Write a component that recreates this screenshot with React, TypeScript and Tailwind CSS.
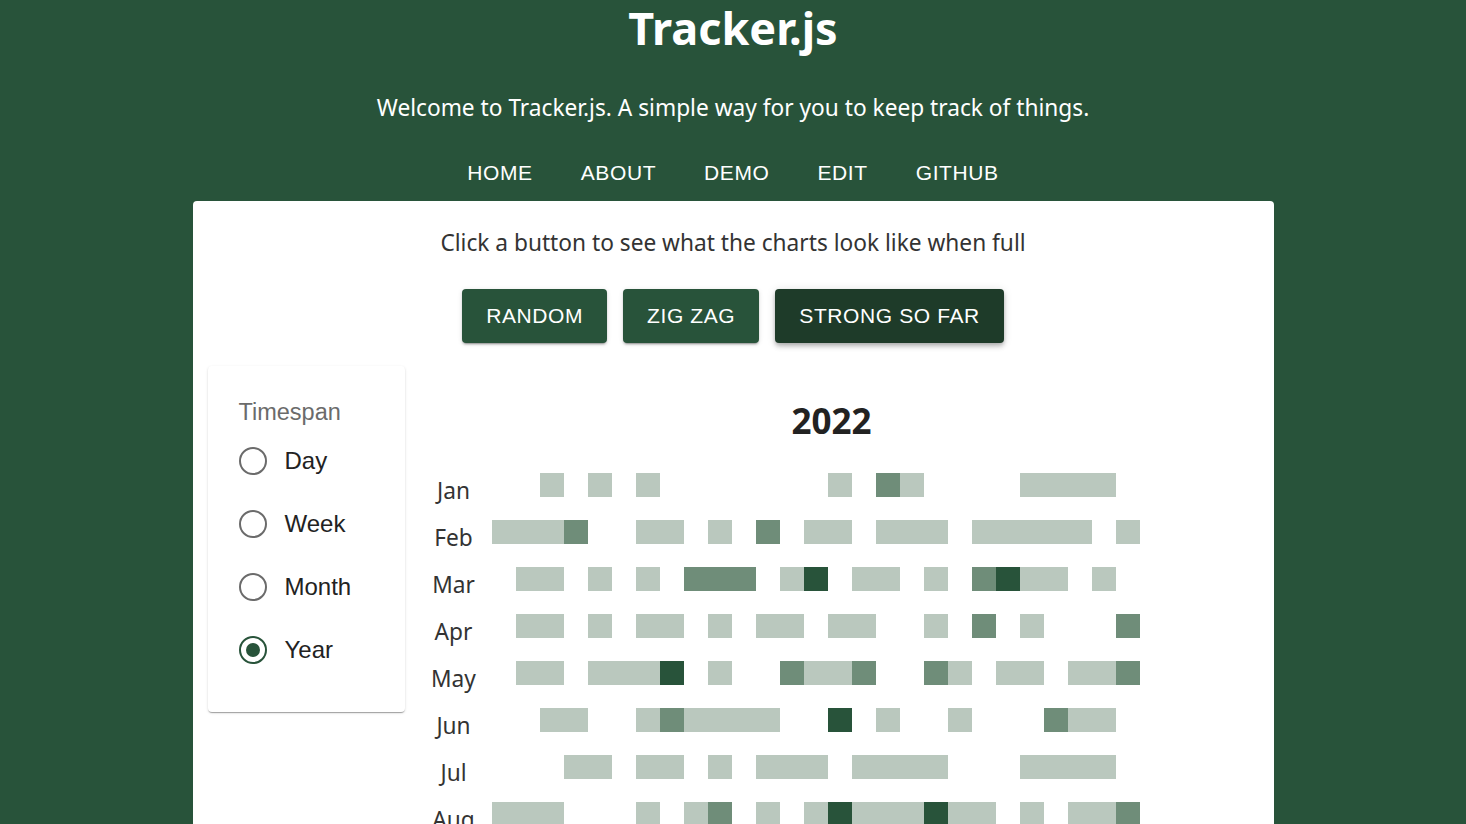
import React, { useState } from 'react';

type Run = [number, number, number];

const MONTHS: { name: string; runs: Run[] }[] = [
  { name: 'Jan', runs: [[2, 2, 1], [4, 4, 1], [6, 6, 1], [14, 14, 1], [16, 16, 2], [17, 17, 1], [22, 25, 1]] },
  { name: 'Feb', runs: [[0, 2, 1], [3, 3, 2], [6, 7, 1], [9, 9, 1], [11, 11, 2], [13, 14, 1], [16, 18, 1], [20, 24, 1], [26, 26, 1]] },
  { name: 'Mar', runs: [[1, 2, 1], [4, 4, 1], [6, 6, 1], [8, 10, 2], [12, 12, 1], [13, 13, 3], [15, 16, 1], [18, 18, 1], [20, 20, 2], [21, 21, 3], [22, 23, 1], [25, 25, 1]] },
  { name: 'Apr', runs: [[1, 2, 1], [4, 4, 1], [6, 7, 1], [9, 9, 1], [11, 12, 1], [14, 15, 1], [18, 18, 1], [20, 20, 2], [22, 22, 1], [26, 26, 2]] },
  { name: 'May', runs: [[1, 2, 1], [4, 6, 1], [7, 7, 3], [9, 9, 1], [12, 12, 2], [13, 14, 1], [15, 15, 2], [18, 18, 2], [19, 19, 1], [21, 22, 1], [24, 25, 1], [26, 26, 2]] },
  { name: 'Jun', runs: [[2, 3, 1], [6, 6, 1], [7, 7, 2], [8, 11, 1], [14, 14, 3], [16, 16, 1], [19, 19, 1], [23, 23, 2], [24, 25, 1]] },
  { name: 'Jul', runs: [[3, 4, 1], [6, 7, 1], [9, 9, 1], [11, 13, 1], [15, 18, 1], [22, 25, 1]] },
  { name: 'Aug', runs: [[0, 2, 1], [6, 6, 1], [8, 8, 1], [9, 9, 2], [11, 11, 1], [13, 13, 1], [14, 14, 3], [15, 17, 1], [18, 18, 3], [19, 20, 1], [22, 22, 1], [24, 25, 1], [26, 26, 2]] },
  { name: 'Sep', runs: [[1, 3, 1], [5, 5, 2], [8, 9, 1], [12, 12, 1], [15, 16, 1], [20, 20, 2], [23, 24, 1]] },
  { name: 'Oct', runs: [[0, 1, 1], [4, 4, 1], [7, 8, 1], [11, 11, 3], [14, 17, 1], [21, 21, 1], [25, 26, 1]] },
  { name: 'Nov', runs: [[2, 2, 1], [5, 7, 1], [10, 10, 2], [13, 14, 1], [18, 19, 1], [22, 22, 2]] },
  { name: 'Dec', runs: [[1, 1, 1], [3, 5, 1], [9, 9, 1], [12, 13, 1], [16, 16, 2], [19, 21, 1]] },
];

const DAYS = 31;

const levelClass = (level: number) => {
  if (level === 3) return 'bg-[#28533a]';
  if (level === 2) return 'bg-[#6f8d79]';
  if (level === 1) return 'bg-[#bac8be]';
  return 'bg-transparent';
};

const expand = (runs: Run[]) => {
  const cells = new Array(DAYS).fill(0);
  runs.forEach(([a, b, lvl]) => {
    for (let i = a; i <= b; i++) cells[i] = lvl;
  });
  return cells;
};

const NAV = ['Home', 'About', 'Demo', 'Edit', 'Github'];
const SPANS = ['Day', 'Week', 'Month', 'Year'];

const App: React.FC = () => {
  const [span, setSpan] = useState('Year');

  return (
    <div className="min-h-screen bg-[#28533a] pb-10">
      <header className="flex flex-col items-center text-white font-['Noto_Sans',sans-serif]">
        <h1 className="text-[45px] font-bold leading-[56px]">Tracker.js</h1>
        <p className="mt-[36px] text-[22.7px] leading-[32px]">
          Welcome to Tracker.js. A simple way for you to keep track of things.
        </p>
        <nav className="mt-[33px] flex gap-[48px] font-['Liberation_Sans',Arial,sans-serif] text-[21px] leading-[32px] tracking-[0.02857em] uppercase">
          {NAV.map((n) => (
            <a key={n} className="cursor-pointer">
              {n}
            </a>
          ))}
        </nav>
      </header>

      <main className="mx-auto mt-[12px] w-[1081px] rounded-[4px] bg-white px-[15px] pb-10">
        <p className="pt-[26px] text-center font-['Noto_Sans',sans-serif] text-[22.7px] leading-[32px] text-[#333]">
          Click a button to see what the charts look like when full
        </p>

        <div className="mt-[30px] flex justify-center gap-[16px] font-['Liberation_Sans',Arial,sans-serif] text-[21px] tracking-[0.02857em] text-white">
          <button className="h-[54px] rounded-[4px] bg-[#28533a] px-[24px] shadow-[0_3px_1px_-2px_rgba(0,0,0,0.2),0_2px_2px_0_rgba(0,0,0,0.14),0_1px_5px_0_rgba(0,0,0,0.12)]">
            RANDOM
          </button>
          <button className="h-[54px] rounded-[4px] bg-[#28533a] px-[24px] shadow-[0_3px_1px_-2px_rgba(0,0,0,0.2),0_2px_2px_0_rgba(0,0,0,0.14),0_1px_5px_0_rgba(0,0,0,0.12)]">
            ZIG ZAG
          </button>
          <button className="h-[54px] rounded-[4px] bg-[#1e3b29] px-[24px] shadow-[0_2px_4px_-1px_rgba(0,0,0,0.2),0_4px_5px_0_rgba(0,0,0,0.14),0_1px_10px_0_rgba(0,0,0,0.12)]">
            STRONG SO FAR
          </button>
        </div>

        <div className="mt-[23px] flex items-start">
          <div className="w-[197px] shrink-0 rounded-[4px] bg-white pl-[31px] pt-[30px] pb-[31px] font-['Liberation_Sans',Arial,sans-serif] shadow-[0_2px_1px_-1px_rgba(0,0,0,0.2),0_1px_1px_0_rgba(0,0,0,0.14),0_1px_3px_0_rgba(0,0,0,0.12)]">
            <div className="text-[23.5px] leading-[32px] text-[#6b6b6b]">Timespan</div>
            <div className="mt-[1px] flex flex-col">
              {SPANS.map((s) => {
                const on = s === span;
                return (
                  <label key={s} className="flex h-[63px] cursor-pointer items-center gap-[18px]" onClick={() => setSpan(s)}>
                    <span
                      className={
                        on
                          ? 'flex h-[28px] w-[28px] items-center justify-center rounded-full border-[2.5px] border-[#28533a]'
                          : 'flex h-[28px] w-[28px] items-center justify-center rounded-full border-[2.5px] border-[#6b6b6b]'
                      }
                    >
                      {on && <span className="h-[14px] w-[14px] rounded-full bg-[#28533a]" />}
                    </span>
                    <span className="text-[24px] text-[#222]">{s}</span>
                  </label>
                );
              })}
            </div>
          </div>

          <div className="flex flex-1 justify-center">
            <div className="flex flex-col pt-[33px]">
              <h2 className="text-center font-['Noto_Sans',sans-serif] text-[35px] font-bold leading-[44px] text-[#222]">2022</h2>
              <div className="mt-[30px] flex flex-col gap-[23px]">
                {MONTHS.map((m) => (
                  <div key={m.name} className="flex h-[24px] items-start gap-[12px]">
                    <div className="mt-[6px] w-[52px] text-center font-['Noto_Sans',sans-serif] text-[22.7px] leading-[24px] text-[#333]">
                      {m.name}
                    </div>
                    <div className="flex">
                      {expand(m.runs).map((lvl, i) => (
                        <div key={i} className={`h-[24px] w-[24px] ${levelClass(lvl)}`} />
                      ))}
                    </div>
                  </div>
                ))}
              </div>
            </div>
          </div>
        </div>
      </main>
    </div>
  );
};

export default App;
